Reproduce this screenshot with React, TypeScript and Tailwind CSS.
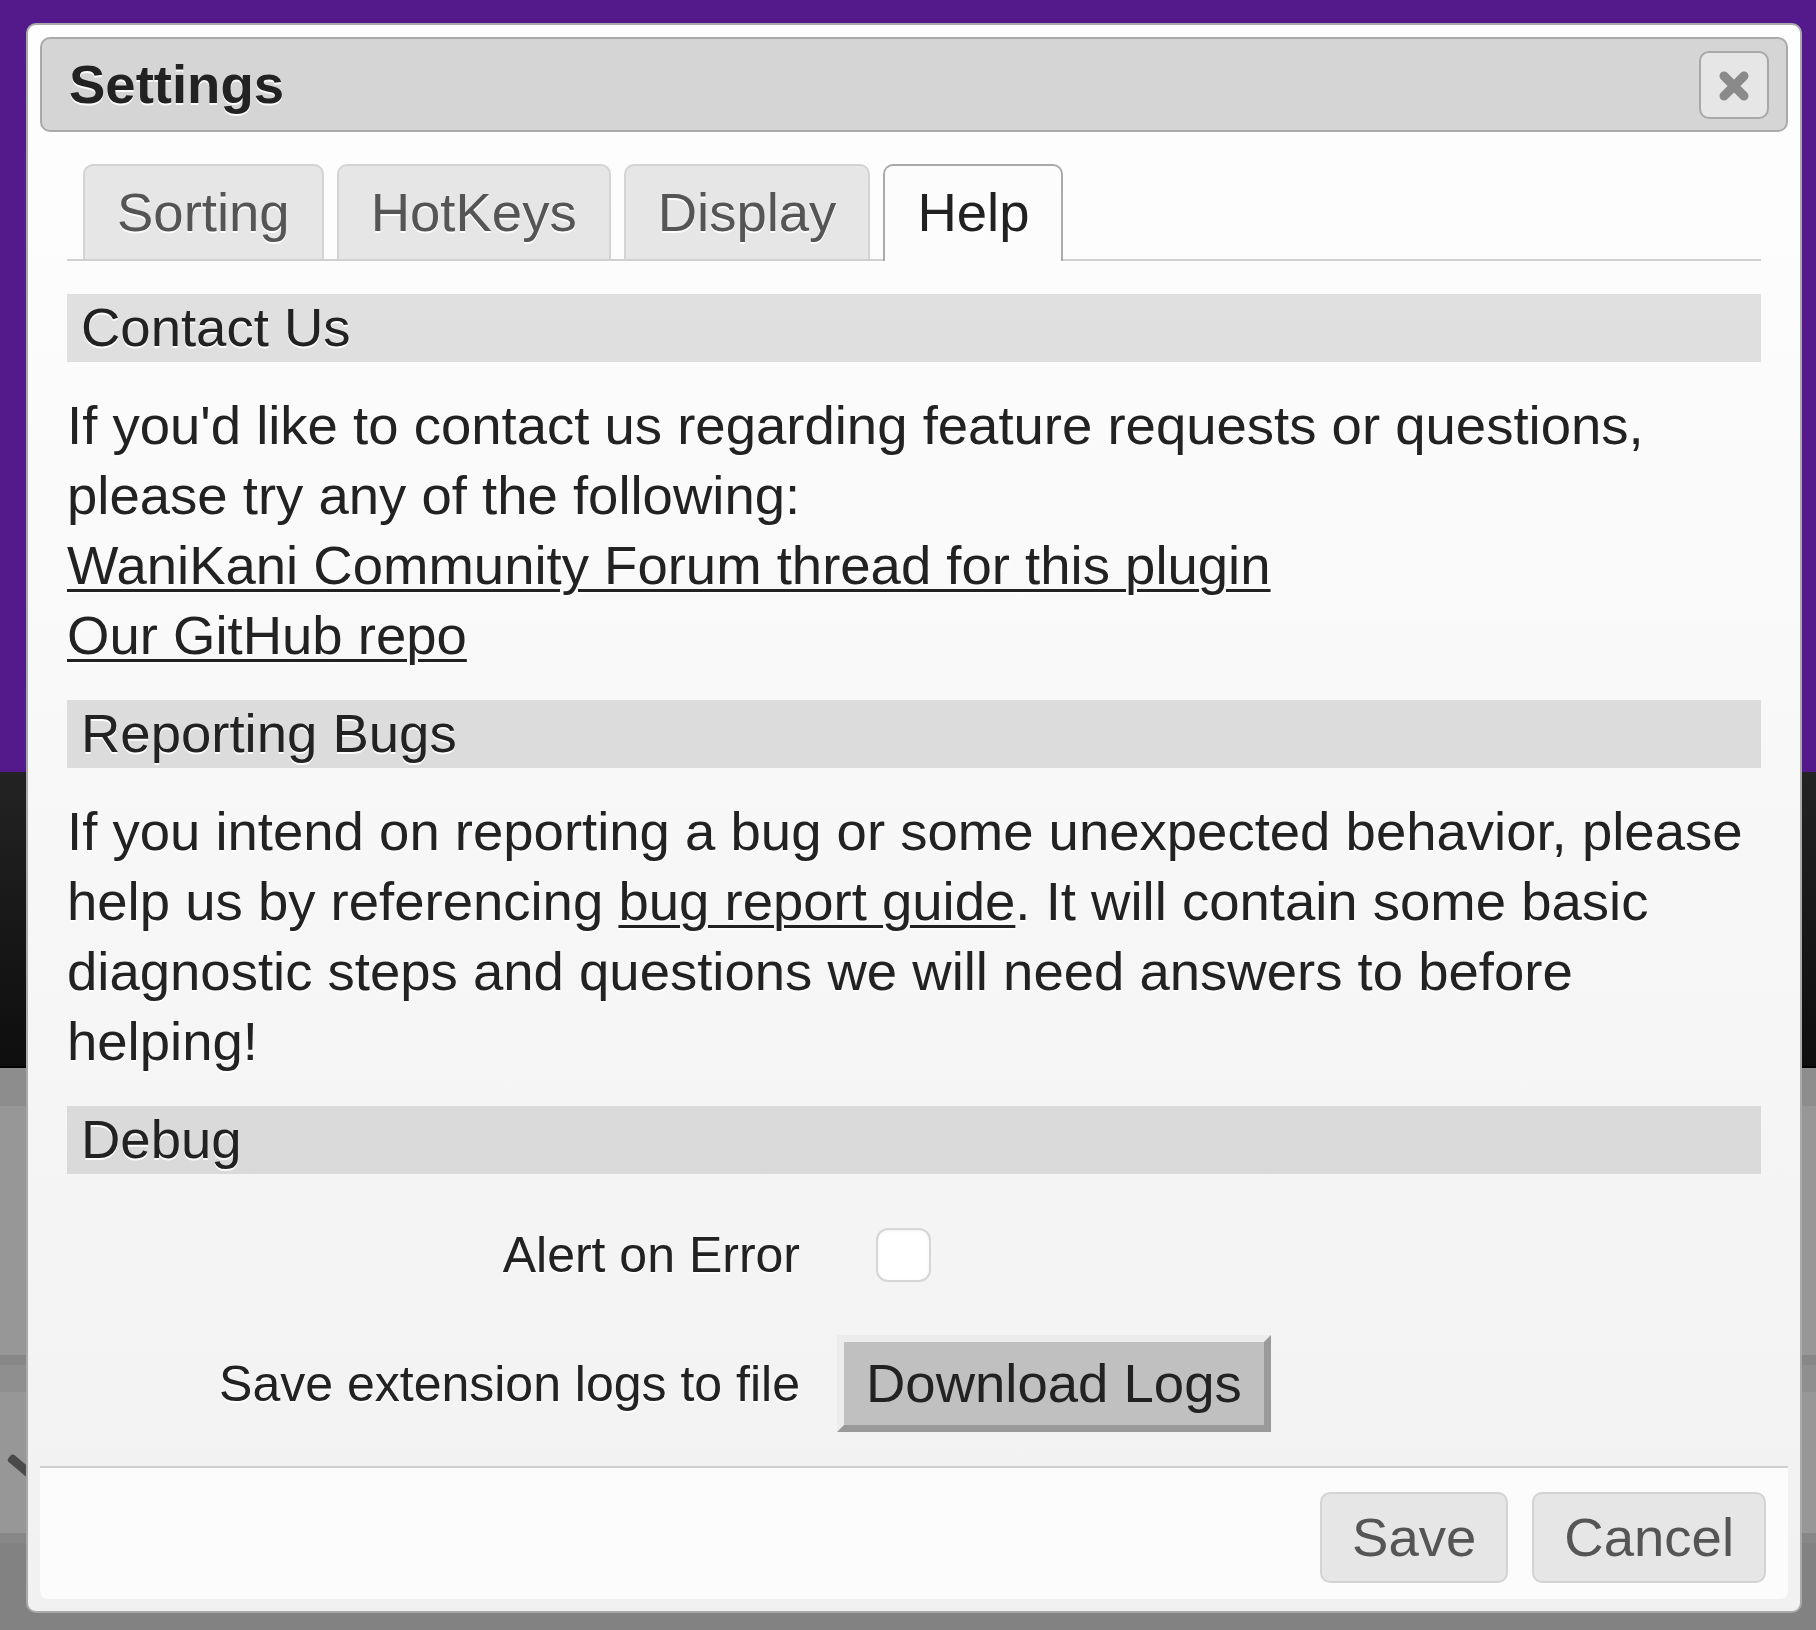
import React from "react";

const font = { fontFamily: '"Liberation Sans", Arial, Helvetica, sans-serif' };

function Tab({ label, active }: { label: string; active?: boolean }) {
  return active ? (
    <div className="-mb-[2px] flex h-[97px] items-center rounded-t-[10px] border-2 border-b-0 border-[#aaaaaa] bg-[#fcfcfc] px-[32px] pb-[2px] text-[#212121]">
      {label}
    </div>
  ) : (
    <div className="flex h-[95px] items-center rounded-t-[10px] border-2 border-b-0 border-[#d3d3d3] bg-[#e6e6e6] px-[32px] text-[#555555]">
      {label}
    </div>
  );
}

function SectionHeader({ children }: { children: React.ReactNode }) {
  return (
    <div className="flex h-[68px] items-center bg-[rgba(0,0,0,0.11)] pl-[14px] text-[#222222]">
      {children}
    </div>
  );
}

export default function App() {
  return (
    <div
      className="relative h-[1630px] w-[1816px] overflow-hidden text-[54.5px] [text-shadow:0_2px_0_rgba(255,255,255,0.9)]"
      style={font}
    >
      {/* page behind the dialog */}
      <div className="flex h-full w-full flex-col">
        <div className="h-[772px] bg-[#54198a]" />
        <div className="h-[296px] border-b-2 border-black bg-linear-to-b from-[#232323] to-[#0e0e0e]" />
        <div className="h-[38px] bg-[#8d8d8d]" />
        <div className="h-[249px] bg-[#979797]" />
        <div className="h-[10px] bg-[#878787]" />
        <div className="h-[27px] bg-[#8f8f8f]" />
        <div className="h-[141px] bg-[#979797]" />
        <div className="h-[10px] bg-[#878787]" />
        <div className="flex-1 bg-[#828282]" />
      </div>
      <div className="absolute left-[6px] top-[1462px] h-[9px] w-[30px] rotate-[40deg] rounded-[3px] bg-[#4a4a4a]" />

      {/* dialog */}
      <div className="absolute left-[26px] top-[23px] flex h-[1590px] w-[1776px] flex-col rounded-[10px] border-2 border-[#a9a9a9] bg-linear-to-b from-[#fefefe] to-[#f1f1f1] p-[12px]">
        {/* title bar */}
        <div className="flex h-[95px] shrink-0 items-center justify-between rounded-[10px] border-2 border-[#aaaaaa] bg-[#d5d5d5] pl-[27px] pr-[17px]">
          <span className="font-bold text-[#222222]">Settings</span>
          <button className="flex h-[68px] w-[70px] items-center justify-center rounded-[10px] border-2 border-[#a8a8a8] bg-[#e6e6e6]">
            <svg width="32" height="32" viewBox="0 0 32 32" className="mt-[3px] blur-[0.6px]">
              <path d="M6 6 L26 26 M26 6 L6 26" stroke="#8a8a8a" strokeWidth="9" strokeLinecap="round" />
            </svg>
          </button>
        </div>

        {/* content */}
        <div className="flex flex-1 flex-col px-[27px] pt-[32px] text-[#222222]">
          <div className="flex items-end gap-[13px] border-b-2 border-[#d0d0d0] pl-[16px]">
            <Tab label="Sorting" />
            <Tab label="HotKeys" />
            <Tab label="Display" />
            <Tab label="Help" active />
          </div>

          <div className="mt-[33px]">
            <SectionHeader>Contact Us</SectionHeader>
          </div>
          <div className="my-[29px] leading-[70px]">
            If you'd like to contact us regarding feature requests or questions, please try any of the following:
            <br />
            <a className="underline decoration-[3px] underline-offset-[5px]">WaniKani Community Forum thread for this plugin</a>
            <br />
            <a className="underline decoration-[3px] underline-offset-[5px]">Our GitHub repo</a>
          </div>

          <SectionHeader>Reporting Bugs</SectionHeader>
          <div className="my-[29px] leading-[70px]">
            If you intend on reporting a bug or some unexpected behavior, please help us by referencing{" "}
            <a className="underline decoration-[3px] underline-offset-[5px]">bug report guide</a>. It will contain some basic
            diagnostic steps and questions we will need answers to before helping!
          </div>

          <SectionHeader>Debug</SectionHeader>

          <div className="mt-[46px] grid grid-cols-[733px_1fr] items-center gap-x-[37px] gap-y-[45px]">
            <div className="h-[70px] text-right text-[50px] leading-[70px]">Alert on Error</div>
            <div className="flex items-center">
              <div className="ml-[39px] h-[54px] w-[55px] rounded-[12px] border-2 border-[#d6d6d6] bg-white shadow-[inset_0_1px_3px_rgba(0,0,0,0.06)]" />
            </div>
            <div className="text-right text-[50px] leading-[70px]">Save extension logs to file</div>
            <div className="flex">
              <button className="h-[97px] border-[7px] border-t-[#ececec] border-l-[#ececec] border-r-[#9a9a9a] border-b-[#9a9a9a] bg-[#c0c0c0] px-[22px] leading-[70px] text-[#222222]">
                Download Logs
              </button>
            </div>
          </div>
        </div>

        {/* button pane */}
        <div className="flex h-[133px] shrink-0 items-start justify-end gap-[24px] rounded-b-[8px] border-t-2 border-[#d0d0d0] bg-[#fcfcfc] pr-[22px] pt-[24px]">
          <button className="h-[91px] rounded-[10px] border-2 border-[#d3d3d3] bg-[#e6e6e6] px-[30px] text-[#555555]">
            Save
          </button>
          <button className="h-[91px] rounded-[10px] border-2 border-[#d3d3d3] bg-[#e6e6e6] px-[30px] text-[#555555]">
            Cancel
          </button>
        </div>
      </div>
    </div>
  );
}
